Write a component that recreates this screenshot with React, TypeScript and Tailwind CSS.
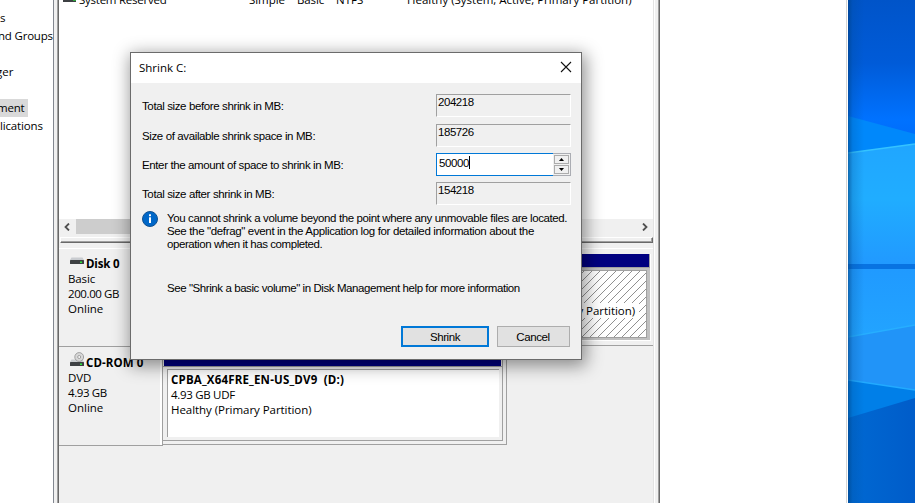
import React from "react";

const ui = "font-['Open_Sans','Noto_Sans',sans-serif]";

function DiskIcon({ cd = false }: { cd?: boolean }) {
  return (
    <svg width="14" height="15" viewBox="0 0 14 15" className="block shrink-0">
      <path d="M1.5 7.5h11L14 10H0z" fill="#c9ccd0" />
      {cd && (
        <g>
          <circle cx="9.2" cy="5" r="4.4" fill="#d8d8d8" stroke="#9a9a9a" strokeWidth="0.9" />
          <circle cx="9.2" cy="5" r="1.5" fill="#f7f7f7" stroke="#8f8f8f" strokeWidth="0.8" />
        </g>
      )}
      <rect x="0" y="10" width="14" height="4" rx="0.5" fill="#3d4043" />
      <rect x="10" y="11.5" width="2" height="1.5" fill="#2ee83c" />
    </svg>
  );
}

function Wallpaper() {
  return (
    <svg width="67" height="503" viewBox="0 0 67 503" className="block">
      <defs>
        <linearGradient id="sky" x1="0" y1="0" x2="0" y2="1">
          <stop offset="0" stopColor="#0054c9" />
          <stop offset="0.45" stopColor="#005bd8" />
          <stop offset="0.85" stopColor="#0072ff" />
          <stop offset="1" stopColor="#006cfa" />
        </linearGradient>
        <linearGradient id="pane" x1="0" y1="0" x2="0" y2="1">
          <stop offset="0" stopColor="#20a6ff" />
          <stop offset="0.45" stopColor="#20adff" />
          <stop offset="1" stopColor="#2199ff" />
        </linearGradient>
        <linearGradient id="low" x1="0" y1="0" x2="0" y2="1">
          <stop offset="0" stopColor="#209aff" />
          <stop offset="1" stopColor="#22a4ff" />
        </linearGradient>
        <linearGradient id="floor" x1="0" y1="0" x2="1" y2="0">
          <stop offset="0" stopColor="#0069d3" />
          <stop offset="1" stopColor="#005cc9" />
        </linearGradient>
        <linearGradient id="edge" x1="0" y1="0" x2="1" y2="0">
          <stop offset="0" stopColor="#003c78" stopOpacity="0.6" />
          <stop offset="0.3" stopColor="#004a90" stopOpacity="0.22" />
          <stop offset="1" stopColor="#004a90" stopOpacity="0" />
        </linearGradient>
      </defs>
      <rect width="67" height="140" fill="url(#sky)" />
      <path d="M0 116L67 134V145L0 154z" fill="#0088fb" />
      <path d="M0 153L67 144V265H0z" fill="url(#pane)" />
      <path d="M0 153L67 144" stroke="#35c3ff" strokeWidth="1.5" />
      <rect y="264" width="67" height="5" fill="#0873e2" />
      <rect y="269" width="67" height="70" fill="url(#low)" />
      <path d="M0 337L67 325V391L0 381z" fill="#2194f8" />
      <path d="M0 337L67 325" stroke="#27aeff" strokeWidth="1.5" />
      <path d="M0 380L67 390V399L0 419z" fill="#007fe8" />
      <path d="M0 418L67 398V503H0z" fill="url(#floor)" />
      <path d="M0 380L67 390" stroke="#22aaff" strokeWidth="1.5" />
      <rect width="16" height="503" fill="url(#edge)" />
    </svg>
  );
}

function Hatch() {
  return (
    <svg width="478" height="66" className="block">
      <defs>
        <pattern id="hatch" width="8" height="8" patternUnits="userSpaceOnUse">
          {[0, 1, 2, 3, 4, 5, 6, 7].map((i) => (
            <rect key={i} x={7 - i} y={i} width="1" height="1" fill="#909090" />
          ))}
        </pattern>
      </defs>
      <rect width="478" height="66" fill="url(#hatch)" />
    </svg>
  );
}

function Sidebar() {
  const row = "h-[18px] leading-[18px] whitespace-nowrap";
  return (
    <div className="w-[53px] h-full shrink-0 bg-white pt-[9px] overflow-hidden text-[11.5px]">
      <div className={row}>s</div>
      <div className={row + " -ml-[2px] tracking-[-0.2px]"}>nd Groups</div>
      <div className="h-[18px]" />
      <div className={row + " -ml-[4px]"}>ger</div>
      <div className="h-[18px]" />
      <div className={row + " w-[28px] bg-[#d9d9d9] -indent-[3px] tracking-[-0.2px]"}>ment</div>
      <div className={row + " tracking-[-0.15px]"}>lications</div>
    </div>
  );
}

function VolumeRow() {
  return (
    <div className="flex h-[8px] items-end pl-[4px] text-[11.5px] whitespace-nowrap">
      <div className="w-[16px] h-[8px] shrink-0">
        <div className="w-[13px] h-[2px] bg-[#3d4043] flex justify-end">
          <div className="w-[3px] h-[1px] bg-[#2ea83c]" />
        </div>
      </div>
      <div className="w-[170px] h-[16px] leading-[16px] shrink-0 tracking-[-0.25px]">System Reserved</div>
      <div className="w-[48px] h-[16px] leading-[16px] shrink-0 tracking-[-0.05px]">Simple</div>
      <div className="w-[39px] h-[16px] leading-[16px] shrink-0 tracking-[-0.1px]">Basic</div>
      <div className="w-[71px] h-[16px] leading-[16px] shrink-0">NTFS</div>
      <div className="h-[16px] leading-[16px] shrink-0">
        Healthy (System, Active, Primary Partition)
      </div>
    </div>
  );
}

function Chevron({ right = false }: { right?: boolean }) {
  return (
    <div className={"w-[17px] h-full flex items-center justify-center " + (right ? "" : "pr-px")}>
      <svg width="6" height="8" viewBox="0 0 6 8">
        <path d={right ? "M1 0.5L4.5 4L1 7.5" : "M5 0.5L1.5 4L5 7.5"} fill="none" stroke="#505050" strokeWidth="1.8" />
      </svg>
    </div>
  );
}

function DiskLabel({ cd = false, lines }: { cd?: boolean; lines: string[] }) {
  return (
    <div className="pl-[9px] text-[11.5px] leading-[15px] whitespace-nowrap tracking-[-0.35px]">
      <div className="flex h-[15px] pl-[2px]">
        <div className={cd ? "-mt-[3px]" : "-mt-[6px]"}>
          <DiskIcon cd={cd} />
        </div>
        <div className={"pl-[2px] font-bold " + (cd ? "tracking-[0.1px]" : "tracking-[-0.15px]")}>{lines[0]}</div>
      </div>
      <div className="tracking-[-0.1px]">{lines[1]}</div>
      <div className="tracking-[-0.4px]">{lines[2]}</div>
      <div className="tracking-[0px]">{lines[3]}</div>
    </div>
  );
}

function Field({ value }: { value: string }) {
  return (
    <div className="w-[135px] h-[23px] border border-t-[#a0a0a0] border-l-[#a0a0a0] border-r-white border-b-white leading-[14px] pl-px text-[11.5px] tracking-[-0.45px]">
      {value}
    </div>
  );
}

function FieldRow({ label, children, gap }: { label: string; children: React.ReactNode; gap: string }) {
  return (
    <div className={"flex justify-between " + gap}>
      <div className="leading-[25px] h-[23px] text-[11.5px] tracking-[-0.38px] whitespace-nowrap">{label}</div>
      {children}
    </div>
  );
}

function Dialog() {
  return (
    <div className="absolute z-20 left-[130px] top-[52px] w-[452px] h-[308px] flex flex-col border border-[#6b6b6b] bg-[#f0f0f0] shadow-[2px_4px_16px_2px_rgba(0,0,0,0.42)] font-['Liberation_Sans',sans-serif] text-black">
      <div className={"h-[30px] shrink-0 bg-white flex items-center justify-between pl-[8px] pr-[9px] " + ui}>
        <span className="text-[11.5px] tracking-[0px]">Shrink C:</span>
        <svg width="12" height="12" viewBox="0 0 12 12" className="-mt-[2px]">
          <path d="M1 1L11 11M11 1L1 11" stroke="#111" strokeWidth="1.1" fill="none" />
        </svg>
      </div>
      <div className="pt-[11px] pl-[11px] pr-[10px] flex flex-col">
        <FieldRow label="Total size before shrink in MB:" gap="mb-[7px]">
          <Field value="204218" />
        </FieldRow>
        <FieldRow label="Size of available shrink space in MB:" gap="mb-[6px]">
          <Field value="185726" />
        </FieldRow>
        <FieldRow label="Enter the amount of space to shrink in MB:" gap="mb-[6px]">
          <div className="w-[135px] h-[23px] flex">
            <div className="w-[117px] h-[23px] bg-white border border-r-0 border-[#0078d7] flex pl-[2px] text-[11.5px] leading-[18px] tracking-[-0.4px]">
              50000
              <div className="w-px h-[13px] mt-[2px] bg-black" />
            </div>
            <div className="w-[18px] h-[23px] border border-l-0 border-[#abadb3] flex flex-col items-center justify-between py-px pr-px">
              <div className="w-[15px] h-[9px] border border-[#acacac] flex items-center justify-center">
                <svg width="5" height="3"><path d="M0 3L2.5 0L5 3z" fill="#000" /></svg>
              </div>
              <div className="w-[15px] h-[9px] border border-[#acacac] flex items-center justify-center">
                <svg width="5" height="3"><path d="M0 0L2.5 3L5 0z" fill="#000" /></svg>
              </div>
            </div>
          </div>
        </FieldRow>
        <FieldRow label="Total size after shrink in MB:" gap="">
          <Field value="154218" />
        </FieldRow>
      </div>
      <div className="flex pl-[11px] pt-[6px]">
        <svg width="16" height="16" viewBox="0 0 16 16" className="shrink-0">
          <circle cx="8" cy="8" r="7.5" fill="#0067c8" stroke="#10508f" />
          <rect x="7" y="6.3" width="2" height="5.7" fill="#fff" />
          <rect x="7" y="3.3" width="2" height="1.9" fill="#fff" />
        </svg>
        <div className="pl-[9px] pt-px text-[11.5px] leading-[13px] whitespace-nowrap">
          <div className="tracking-[-0.385px]">You cannot shrink a volume beyond the point where any unmovable files are located.</div>
          <div className="tracking-[-0.35px]">See the "defrag" event in the Application log for detailed information about the</div>
          <div className="tracking-[-0.42px]">operation when it has completed.</div>
        </div>
      </div>
      <div className="pl-[36px] mt-[31px] text-[11.5px] leading-[13px] tracking-[-0.425px] whitespace-nowrap">
        See "Shrink a basic volume" in Disk Management help for more information
      </div>
      <div className="mt-[31px] flex gap-[8px] justify-end pr-[11px] text-[11.5px] tracking-[-0.4px] text-center">
        <div className="w-[88px] h-[21px] bg-[#e1e1e1] border-2 border-[#0078d7] leading-[18px]">Shrink</div>
        <div className="w-[73px] h-[21px] bg-[#e1e1e1] border border-[#adadad] leading-[20px] pr-px">Cancel</div>
      </div>
    </div>
  );
}

export default function App() {
  return (
    <div className={"relative w-[915px] h-[503px] overflow-hidden bg-white text-black flex " + ui}>
      <Sidebar />
      <div className="w-[6px] shrink-0 bg-[#f0f0f0] border-l border-l-[#828790] flex justify-end">
        <div className="w-px bg-[#a0a0a0]" />
        <div className="w-px bg-[#696969]" />
      </div>
      <div className="w-[594px] shrink-0 bg-[#f0f0f0] flex flex-col">
        <div className="h-[219px] shrink-0 bg-white">
          <VolumeRow />
        </div>
        <div className="h-[15px] shrink-0 flex">
          <Chevron />
          <div className="w-[420px] bg-[#cdcdcd]" />
          <div className="flex-1" />
          <Chevron right />
        </div>
        <div className="h-[9px] shrink-0 pt-[3px]">
          <div className="h-[6px] ml-px border-t border-l border-t-white border-l-white border-r border-r-[#696969] border-b border-b-[#696969]">
            <div className="h-[4px] border-b border-r border-[#a0a0a0]" />
          </div>
        </div>
        <div className="h-[6px] shrink-0 border-b border-white" />
        <div className="h-[98px] shrink-0 flex">
          <div className="w-[104px] border-b border-[#a0a0a0] pt-[7px]">
            <DiskLabel lines={["Disk 0", "Basic", "200.00 GB", "Online"]} />
          </div>
          <div className="h-[97px] flex-1 border-b border-[#a0a0a0] pt-[5px] pr-[2px] pl-[2px]">
            <div className="h-[87px] bg-[#c0c0c0] border-r border-b border-white">
              <div className="h-[13px] bg-[#000080] border-r border-[#a0a0a0]" />
              <div className="h-[3px] border-t border-[#a0a0a0]" />
              <div className="h-[68px] ml-[3px] mr-[3px] border border-[#a0a0a0] bg-white grid overflow-hidden">
                <div className="col-start-1 row-start-1">
                  <Hatch />
                </div>
                <div className="col-start-1 row-start-1 flex justify-end pt-[32px] pr-[7px]">
                  <div className="h-[15px] leading-[15px] bg-white text-[11.5px] tracking-[-0.05px] pr-[4px] whitespace-nowrap z-10">
                    Healthy (Primary Partition)
                  </div>
                </div>
              </div>
            </div>
          </div>
        </div>
        <div className="h-[99px] shrink-0 flex">
          <div className="w-[104px] border-b border-r border-[#a0a0a0]">
            <div className="h-[98px] border-r-2 border-white pt-[8px]">
              <DiskLabel cd lines={["CD-ROM 0", "DVD", "4.93 GB", "Online"]} />
            </div>
          </div>
          <div className="w-[344px] h-[98px] border-r border-b border-[#a0a0a0] pr-[3px] pb-[3px]">
            <div className="h-full border-r border-b border-[#a0a0a0]">
              <div className="h-[19px] ml-px mr-px bg-[#000080]" />
              <div className="h-px bg-[#a0a0a0]" />
              <div className="mt-[2px] ml-[4px] mr-[3px] h-[68px] bg-white border-t border-l border-[#a0a0a0] pl-[3px] pt-[2px] text-[11.5px] leading-[15px] whitespace-nowrap">
                <div className="font-bold tracking-[0.18px] whitespace-pre">{"CPBA_X64FRE_EN-US_DV9  (D:)"}</div>
                <div className="tracking-[-0.3px]">4.93 GB UDF</div>
                <div className="tracking-[-0.05px]">Healthy (Primary Partition)</div>
              </div>
            </div>
          </div>
        </div>
      </div>
      <div className="w-[7px] shrink-0 bg-[#f0f0f0] flex">
        <div className="w-px bg-[#e3e3e3]" />
        <div className="w-px bg-white" />
        <div className="w-[3px]" />
        <div className="w-px bg-[#a0a0a0]" />
        <div className="w-px bg-[#696969]" />
      </div>
      <div className="flex-1 bg-white" />
      <div className="w-px bg-[#d4d4d4] mr-px" />
      <Wallpaper />
      <Dialog />
    </div>
  );
}
